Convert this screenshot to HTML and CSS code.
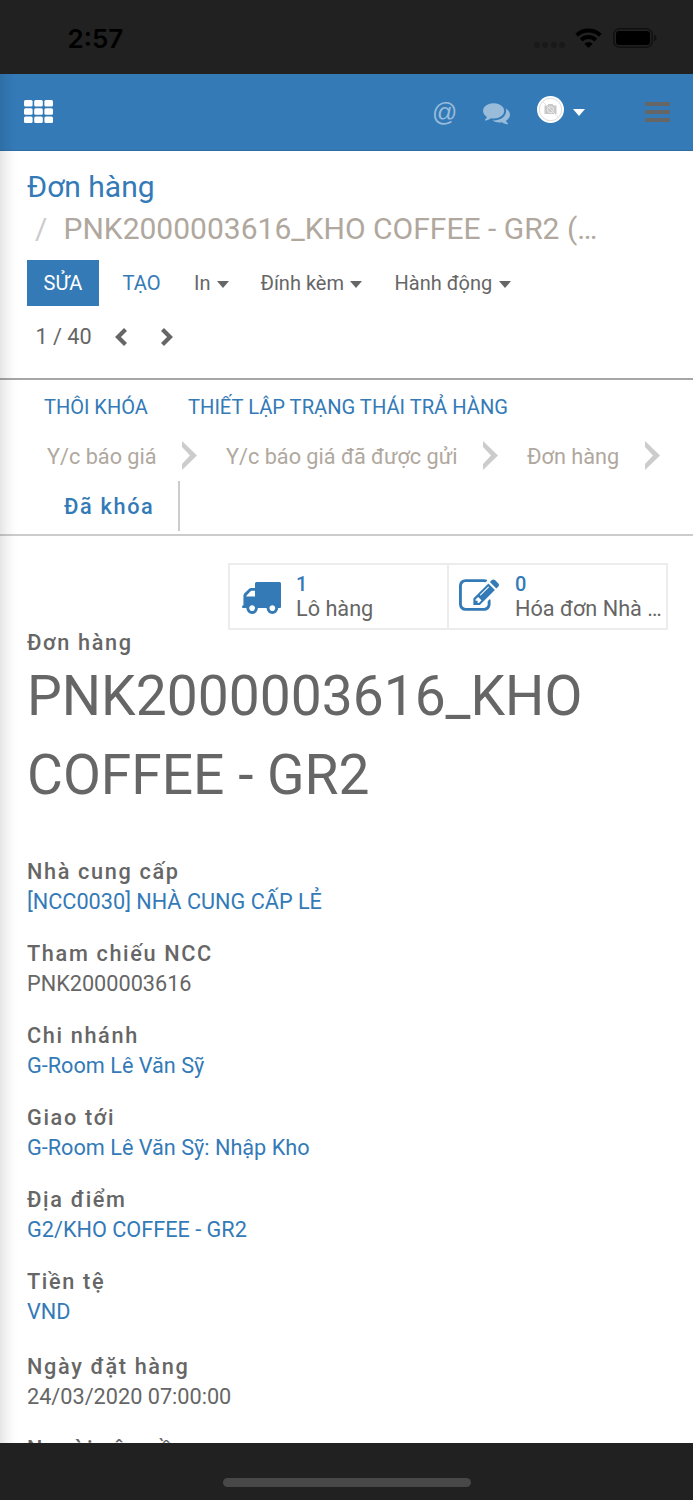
FILE: index.html
```html
<!DOCTYPE html>
<html lang="vi">
<head>
<meta charset="utf-8">
<title>Đơn hàng</title>
<link rel="stylesheet" href="styles.css">
</head>
<body>
<div class="status-bar">
  <span class="clock">2:57</span>
  <span class="signal"><i></i><i></i><i></i><i></i></span>
  <svg class="wifi" viewBox="0 0 27 20"><g fill="none" stroke="#000" stroke-width="4"><path d="M1.7 7.2A17 17 0 0 1 25.3 7.2"/><path d="M6.2 12A10.6 10.6 0 0 1 20.800 12"/></g><path d="M13.500 20L9.300 15.800A6 6 0 0 1 17.700 15.800Z"/></svg>
  <svg class="battery" viewBox="0 0 44 20"><rect x=".8" y=".8" width="38.400" height="18.400" rx="5.500" fill="none" stroke="#111" stroke-width="1.500"/><rect x="3" y="3" width="34" height="14" rx="3"/><path d="M41 6.500q2.600 1 2.600 3.500T41 13.500z" fill="#111"/></svg>
</div>
<div class="screen">
  <header class="navbar">
    <svg class="apps" viewBox="0 0 29 23" fill="#fff"><rect width="8.600" height="6.500" rx="1.500"/><rect x="10.200" width="8.600" height="6.500" rx="1.500"/><rect x="20.400" width="8.600" height="6.500" rx="1.500"/><rect y="8.200" width="8.600" height="6.500" rx="1.500"/><rect x="10.200" y="8.200" width="8.600" height="6.500" rx="1.500"/><rect x="20.400" y="8.200" width="8.600" height="6.500" rx="1.500"/><rect y="16.400" width="8.600" height="6.500" rx="1.500"/><rect x="10.200" y="16.400" width="8.600" height="6.500" rx="1.500"/><rect x="20.400" y="16.400" width="8.600" height="6.500" rx="1.500"/></svg>
    <span class="at">@</span>
    <svg class="comments" viewBox="0 256 1792 1408"><path d="M1408 768q0 139-94 257t-256.500 186.500-353.500 68.500q-86 0-176-16-124 88-278 128-36 9-86 16h-3q-11 0-20.500-8t-11.500-21q-1-3-1-6.500t.5-6.500 2-6l2.500-5 3.500-5.500 4-5 4.500-5 4-4.500q5-6 23-25t26-29.500 22.500-29 25-38.500 20.500-44q-124-72-195-177t-71-224q0-139 94-257t256.500-186.500 353.500-68.500 353.500 68.500 256.500 186.500 94 257zm384 256q0 120-71 224.500t-195 176.500q10 24 20.500 44t25 38.500 22.500 29 26 29.500 23 25q1 1 4 4.500t4.500 5 4 5 3.500 5.500l2.500 5 2 6 .5 6.500-1 6.500q-3 14-13 22t-22 7q-50-7-86-16-154-40-278-128-90 16-176 16-271 0-472-132 58 4 88 4 161 0 309-45t264-129q125-92 192-212t67-254q0-77-23-152 129 71 204 178t75 230z"/></svg>
    <svg class="avatar" viewBox="0 0 27 27"><circle cx="13.500" cy="13.500" r="13.500" fill="#fff"/><circle cx="13.500" cy="13.500" r="11.200" fill="none" stroke="#ddd"/><path d="M7.500 9.500h3l1-1.500h4l1 1.500h3v8.500h-12z" fill="#c8c8c8"/><circle cx="13.500" cy="13.700" r="3" fill="#c8c8c8" stroke="#eee"/><path d="M5.500 5.500l16 16" stroke="#e3e3e3"/></svg>
    <i class="caret caret-white"></i>
    <span class="menu"><i></i><i></i><i></i></span>
  </header>
  <section class="control-panel">
    <div class="crumb"><a class="crumb-link">Đơn hàng</a></div>
    <div class="crumb crumb-current"><span class="slash">/</span><span class="crumb-name">PNK2000003616_KHO COFFEE - GR2 (…</span></div>
    <div class="actions">
      <button class="btn-primary">SỬA</button>
      <span class="btn-create">TẠO</span>
      <span class="drop drop-print">In<i class="caret"></i></span>
      <span class="drop drop-attach">Đính kèm<i class="caret"></i></span>
      <span class="drop drop-action">Hành động<i class="caret"></i></span>
    </div>
    <div class="pager"><span class="count">1 / 40</span>
      <svg class="chev" viewBox="0 0 12 18"><path d="M10.500 1.500L3 9l7.500 7.500"/></svg>
      <svg class="chev chev-next" viewBox="0 0 12 18"><path d="M1.500 1.500L9 9l-7.500 7.500"/></svg>
    </div>
  </section>
  <section class="statusbar">
    <div class="links"><span class="unlock">THÔI KHÓA</span><span class="returns">THIẾT LẬP TRẠNG THÁI TRẢ HÀNG</span></div>
    <div class="steps">
      <span class="step step-1">Y/c báo giá</span><svg class="arrow" viewBox="0 0 15 29"><path d="M0 0l15 14.500L0 29v-6l8-8.500L0 6z"/></svg>
      <span class="step step-2">Y/c báo giá đã được gửi</span><svg class="arrow" viewBox="0 0 15 29"><path d="M0 0l15 14.500L0 29v-6l8-8.500L0 6z"/></svg>
      <span class="step step-3">Đơn hàng</span><svg class="arrow" viewBox="0 0 15 29"><path d="M0 0l15 14.500L0 29v-6l8-8.500L0 6z"/></svg>
    </div>
    <div class="current"><span>Đã khóa</span></div>
  </section>
  <main class="sheet">
    <div class="stats">
      <div class="stat"><svg class="truck" viewBox="64 256 1728 1408"><path d="M640 1408q0-52-38-90t-90-38-90 38-38 90 38 90 90 38 90-38 38-90zm-384-512h384v-256h-158q-13 0-22 9l-195 195q-9 9-9 22v30zm1280 512q0-52-38-90t-90-38-90 38-38 90 38 90 90 38 90-38 38-90zm256-1088v1024q0 15-4 26.500t-13.500 18.500-16.500 11.500-23.500 6-22.500 2-25.500 0-22.500-.5q0 106-75 181t-181 75-181-75-75-181h-384q0 106-75 181t-181 75-181-75-75-181h-64q-3 0-22.500.5t-25.500 0-22.500-2-23.500-6-16.500-11.500-13.500-18.500-4-26.500q0-26 19-45t45-19v-320q0-8-.5-35t0-38 2.500-34.500 6.500-37 14-30.500 22.500-30l198-198q19-19 50.500-32t58.500-13h160v-192q0-26 19-45t45-19h1024q26 0 45 19t19 45z"/></svg><div class="stat-text"><b>1</b><span>Lô hàng</span></div></div>
      <div class="stat"><svg class="edit" viewBox="0 128 1784 1408"><path d="M888 1184l116-116-152-152-116 116v56h96v96h56zm440-720q-16-16-33 1l-350 350q-17 17-1 33t33-1l350-350q17-17 1-33zm80 594v190q0 119-84.500 203.500t-203.500 84.500h-832q-119 0-203.500-84.500t-84.500-203.500v-832q0-119 84.500-203.500t203.500-84.500h832q63 0 117 25 15 7 18 23 3 17-9 29l-49 49q-14 14-32 8-23-6-45-6h-832q-66 0-113 47t-47 113v832q0 66 47 113t113 47h832q66 0 113-47t47-113v-126q0-13 9-22l64-64q15-15 35-7t20 29zm-96-738l288 288-672 672h-288v-288zm444 132l-92 92-288-288 92-92q28-28 68-28t68 28l152 152q28 28 28 68t-28 68z"/></svg><div class="stat-text"><b>0</b><span>Hóa đơn Nhà …</span></div></div>
    </div>
    <div class="label">Đơn hàng</div>
    <h1>PNK2000003616_KHO<br>COFFEE - GR2</h1>
    <dl>
      <div class="field"><dt>Nhà cung cấp</dt><dd class="link">[NCC0030] NHÀ CUNG CẤP LẺ</dd></div>
      <div class="field"><dt>Tham chiếu NCC</dt><dd>PNK2000003616</dd></div>
      <div class="field"><dt>Chi nhánh</dt><dd class="link">G-Room Lê Văn Sỹ</dd></div>
      <div class="field"><dt>Giao tới</dt><dd class="link">G-Room Lê Văn Sỹ: Nhập Kho</dd></div>
      <div class="field"><dt>Địa điểm</dt><dd class="link">G2/KHO COFFEE - GR2</dd></div>
      <div class="field field-last"><dt>Tiền tệ</dt><dd class="link">VND</dd></div>
      <div class="field"><dt>Ngày đặt hàng</dt><dd>24/03/2020 07:00:00</dd></div>
      <div class="field"><dt>Người yêu cầu</dt></div>
    </dl>
  </main>
  <div class="edge-shadow"></div>
</div>
<footer class="home-bar"><i></i></footer>
</body>
</html>
```
FILE: styles.css
```css
* { box-sizing: border-box; }
body { margin: 0; width: 693px; height: 1500px; overflow: hidden; display: flex; flex-direction: column; font-family: Roboto, "Liberation Sans", sans-serif; font-size: 21.680px; color: #666; background: #fff; }
svg, i { display: block; flex: none; }
span, a, button { white-space: nowrap; }
.status-bar { flex: none; height: 74px; background: #212121; display: flex; align-items: flex-start; color: #000; }
.clock { margin: 23px 0 0 67.500px; width: 466.500px; font: 600 26px/32px Inter, sans-serif; }
.signal { display: flex; gap: 2.400px; padding-top: 42px; width: 43px; }
.signal i { width: 6px; height: 6px; border-radius: 3px; background: #191919; }
.wifi { width: 27px; height: 20px; margin: 28px 0 0 -2px; }
.battery { width: 44px; height: 20px; margin: 28px 0 0 10.500px; }
.screen { position: relative; height: 1368.500px; overflow: hidden; flex: none; }
.edge-shadow { position: absolute; left: 0; top: 0; bottom: 0; width: 18px; background: linear-gradient(90deg, rgba(0,0,0,.1), rgba(0,0,0,.05) 35%, rgba(0,0,0,.01) 75%, transparent); }
.navbar { height: 77px; background: #337ab7; border-bottom: 1px solid #2d6da3; display: flex; align-items: flex-start; }
.apps { width: 29px; height: 23px; margin: 26px 0 0 23.500px; }
.at { margin: 24px 0 0 379.500px; width: 26px; font: 25px/29px "Liberation Sans", sans-serif; color: #99bcdb; }
.comments { width: 27px; height: 21.500px; margin: 29px 0 0 25px; fill: #99bcdb; }
.avatar { width: 27px; height: 27px; margin: 21.500px 0 0 26.500px; }
.caret { width: 0; height: 0; border: 6.500px solid transparent; border-top-color: currentColor; border-bottom: 0; }
.drop .caret { border-top-width: 7px; }
.caret-white { color: #fff; margin: 35px 0 0 9px; border-top-width: 7px; }
.menu { margin: 28px 0 0 60px; display: grid; gap: 4px; }
.menu i { width: 25px; height: 4px; border-radius: 1px; background: #666; }
.control-panel { height: 229px; padding: 15px 0 0 27px; border-bottom: 2px solid #a6a6a6; }
.crumb { height: 42px; line-height: 42px; font-size: 30px; display: flex; }
.crumb-link, .link { color: #337ab7; }
.crumb-current { color: #b0a89e; }
.slash { color: #ccc; width: 36.500px; padding-left: 8px; }
.actions { margin-top: 10px; height: 46px; display: flex; align-items: center; font-size: 20px; }
.btn-primary { width: 72px; height: 46px; padding: 0; border: 0; background: #337ab7; color: #fff; font: 20px Roboto, sans-serif; }
.btn-create { color: #337ab7; margin-left: 23.500px; width: 71.500px; font-size: 20.200px; }
.drop { display: flex; align-items: center; gap: 6.500px; }
.drop .caret { margin-top: 2px; }
.drop-print { width: 66.500px; }
.drop-attach { width: 134px; }
.pager { display: flex; align-items: center; height: 60px; padding-left: 8.500px; }
.count { width: 79.500px; }
.chev { width: 12px; height: 18px; fill: none; stroke: #666; stroke-width: 4.200; margin-top: 2px; }
.chev-next { margin-left: 33.500px; }
.statusbar { height: 156px; border-bottom: 2px solid #ccc; }
.links { height: 52px; line-height: 54px; font-size: 20px; padding-left: 44px; display: flex; color: #337ab7; }
.unlock { width: 144px; }
.returns { font-size: 20.150px; }
.steps { height: 49px; display: flex; align-items: center; padding-left: 47px; color: #b0a89e; }
.step-1 { width: 135px; }
.step-2 { width: 257px; margin-left: 29px; }
.step-3 { width: 118px; margin-left: 29px; }
.arrow { width: 15px; height: 29px; fill: #ccc; margin-top: -2px; }
.current { width: 180px; height: 50px; border-right: 2px solid #ccc; padding-left: 64px; line-height: 51.500px; color: #337ab7; font-weight: 500; letter-spacing: 1.650px; }
.sheet { padding: 27px 0 0 27px; }
.stats { width: 440px; height: 67px; margin-left: 201px; border: 2px solid #ececec; display: flex; }
.stat { flex: none; width: 217px; display: flex; }
.stat + .stat { border-left: 2px solid #ececec; width: 219px; }
.stat-text { display: flex; flex-direction: column; line-height: 24.500px; padding-top: 7px; }
.stat b { font-weight: 500; font-size: 20px; color: #337ab7; }
.truck { width: 39px; height: 32px; margin: 17px 15.500px 0 11.500px; fill: #337ab7; }
.edit { width: 40px; height: 32px; margin: 14px 16px 0 10px; fill: #337ab7; }
.label, dt { font-weight: 500; letter-spacing: 1.650px; height: 30px; line-height: 30px; }
.label { margin-top: -2px; }
h1 { margin: -1px 0 0; font-size: 55.150px; line-height: 79px; font-weight: 400; white-space: nowrap; }
dl { margin: 42px 0 0; }
.field { height: 82px; }
.field-last { height: 85.400px; }
dd { margin: 0; height: 30px; line-height: 30px; white-space: nowrap; }
.home-bar { height: 57.500px; background: #212121; padding-top: 35px; flex: none; }
.home-bar i { width: 248px; height: 9px; border-radius: 5px; background: #484848; margin-left: 222.500px; }
```
